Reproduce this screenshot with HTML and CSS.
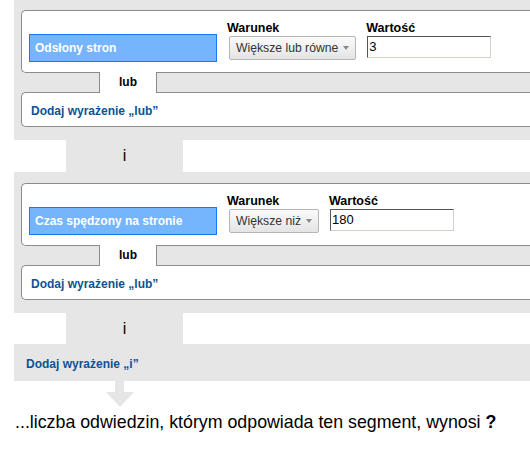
FILE: index.html
```html
<!DOCTYPE html>
<html lang="pl">
<head>
<meta charset="utf-8">
<title>Segment</title>
<link rel="stylesheet" href="styles.css">
</head>
<body>
<div class="page">
  <div class="group first">
    <div class="card cond">
      <div class="field">Odsłony stron</div>
      <div class="ctl">
        <div class="lbl">Warunek</div>
        <div class="select">Większe lub równe<span class="caret"></span></div>
      </div>
      <div class="ctl">
        <div class="lbl">Wartość</div>
        <div class="input">3</div>
      </div>
    </div>
    <div class="or-tab">lub</div>
    <div class="card add"><span class="link">Dodaj wyrażenie „lub”</span></div>
  </div>
  <div class="and-tab">i</div>
  <div class="group second">
    <div class="card cond">
      <div class="field">Czas spędzony na stronie</div>
      <div class="ctl">
        <div class="lbl">Warunek</div>
        <div class="select">Większe niż<span class="caret"></span></div>
      </div>
      <div class="ctl">
        <div class="lbl">Wartość</div>
        <div class="input">180</div>
      </div>
    </div>
    <div class="or-tab">lub</div>
    <div class="card add"><span class="link">Dodaj wyrażenie „lub”</span></div>
  </div>
  <div class="and-tab last">i</div>
  <div class="band"><span class="link">Dodaj wyrażenie „i”</span></div>
  <svg class="arrow" width="28" height="26" viewBox="0 0 28 26"><polygon points="9,0 18,0 18,11 28,11 14,26 0,11 9,11" fill="#e6e6e6"/></svg>
  <p class="result">...liczba odwiedzin, którym odpowiada ten segment, wynosi <b>?</b></p>
</div>
</body>
</html>
```
FILE: styles.css
```css
html, body {
  margin: 0;
  padding: 0;
  background: #fff;
}
body {
  font-family: "Liberation Sans", Arial, sans-serif;
  color: #000;
  width: 530px;
  overflow: hidden;
}
.page {
  padding-left: 14px;
}
.group {
  background: #e6e6e6;
  padding: 10px 0 13px 7px;
}
.group.second {
  padding-top: 11px;
}
.card {
  box-sizing: border-box;
  background: #fff;
  border: 1px solid #8c8c8c;
  border-right: none;
  border-radius: 5px 0 0 5px;
}
.card.cond {
  height: 63px;
  display: flex;
  align-items: flex-start;
  padding: 10px 0 0 7px;
}
.field {
  box-sizing: border-box;
  width: 188px;
  height: 28px;
  margin-top: 13px;
  margin-right: 10px;
  background: #74b5fd;
  border: 1px solid #1a76f2;
  color: #fff;
  font-weight: bold;
  font-size: 12px;
  line-height: 26px;
  padding-left: 5px;
}
.ctl {
  display: flex;
  flex-direction: column;
  margin-right: 10px;
}
.lbl {
  font-weight: bold;
  font-size: 12.5px;
  line-height: 15px;
  height: 15px;
}
.select {
  box-sizing: border-box;
  height: 24px;
  margin-left: 2px;
  padding: 0 6px 0 6px;
  border: 1px solid #b5b5b5;
  border-radius: 2px;
  background: linear-gradient(#fbfbfb, #e4e4e4);
  color: #333;
  font-size: 12.2px;
  line-height: 22px;
  display: flex;
  align-items: center;
  white-space: nowrap;
}
.caret {
  width: 0;
  height: 0;
  margin-left: 5px;
  border-left: 3.5px solid transparent;
  border-right: 3.5px solid transparent;
  border-top: 4px solid #8a8a8a;
}
.input {
  box-sizing: border-box;
  width: 124px;
  height: 22px;
  margin-left: 1px;
  border: 1px solid #d4d0c8;
  border-top-color: #555;
  border-left-color: #555;
  background: #fff;
  font-size: 13px;
  line-height: 20px;
  padding-left: 1px;
}
.or-tab {
  position: relative;
  z-index: 1;
  box-sizing: border-box;
  width: 58px;
  height: 21px;
  margin: -1px 0 -1px 78px;
  background: #fff;
  border-left: 1px solid #8c8c8c;
  border-right: 1px solid #8c8c8c;
  text-align: center;
  font-weight: bold;
  font-size: 12px;
  line-height: 20px;
}
.card.add {
  height: 35px;
  padding-left: 9px;
  line-height: 33px;
}
.link {
  color: #0b5394;
  font-weight: bold;
  font-size: 12px;
}
.and-tab {
  width: 117px;
  height: 32px;
  margin-left: 52px;
  background: #e6e6e6;
  text-align: center;
  font-size: 16px;
  line-height: 31px;
}
.and-tab.last {
  height: 31px;
}
.band {
  height: 37px;
  background: #e6e6e6;
  padding-left: 12px;
  line-height: 37px;
}
.arrow {
  display: block;
  margin-left: 92px;
}
.result {
  margin: 5px 0 0 1px;
  font-size: 17.8px;
  line-height: 20px;
  white-space: nowrap;
}
```
